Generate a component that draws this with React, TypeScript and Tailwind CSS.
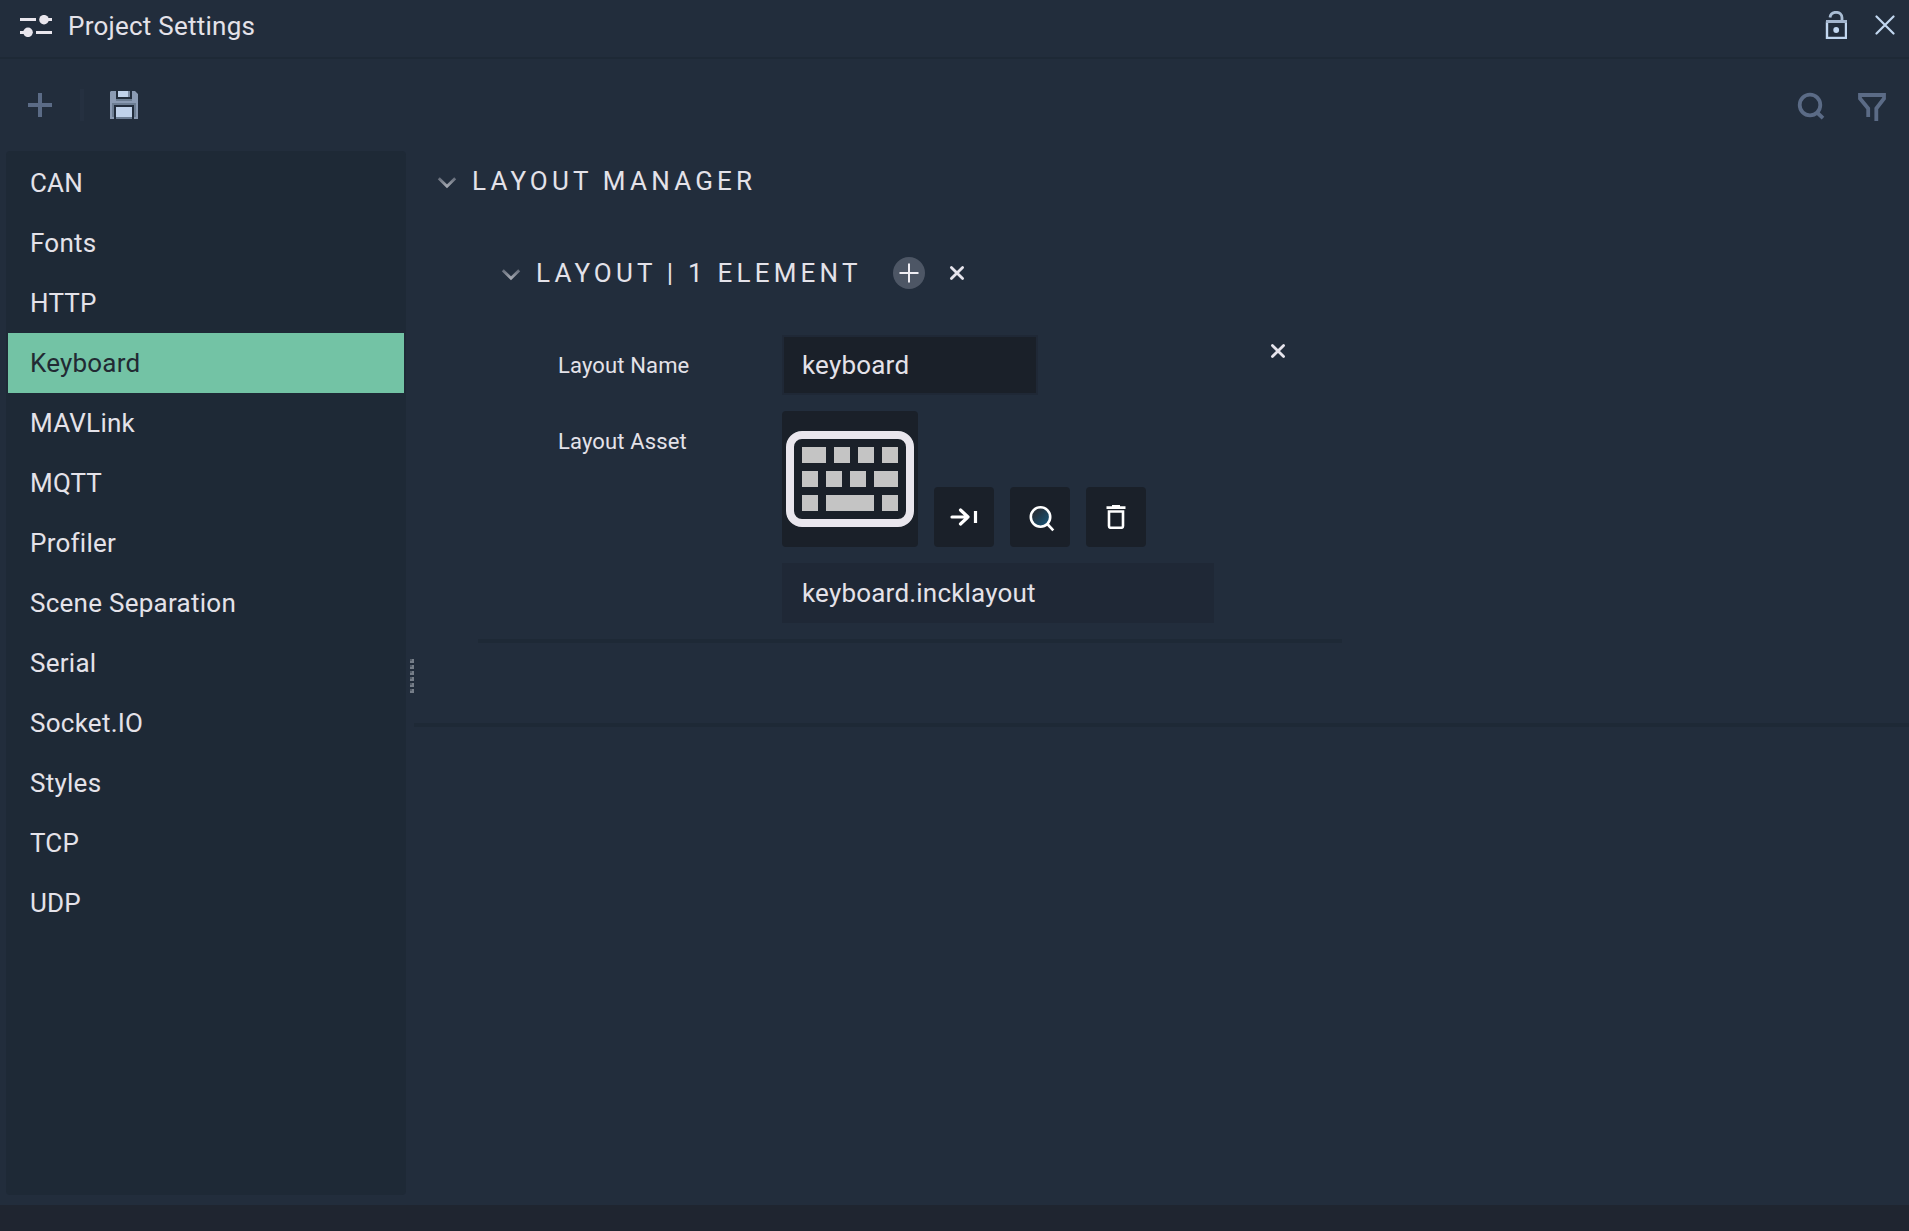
import React from "react";

const categories = [
  "CAN", "Fonts", "HTTP", "Keyboard", "MAVLink", "MQTT", "Profiler",
  "Scene Separation", "Serial", "Socket.IO", "Styles", "TCP", "UDP",
];

// x, y, width on the keyboard drawing; every key is 16 high
const keys = [
  [16, 16, 24], [48, 16, 16], [72, 16, 16], [96, 16, 16],
  [16, 40, 16], [40, 40, 16], [64, 40, 16], [88, 40, 24],
  [16, 64, 16], [40, 64, 48], [96, 64, 16],
];

function Chevron() {
  return (
    <svg className="mt-1 block h-3 w-5" viewBox="0 0 20 12" fill="none" strokeWidth="2.800">
      <defs>
        <linearGradient id="chevron" x1="0" y1="0" x2="0" y2="1">
          <stop offset="0" stopColor="#666d7a" />
          <stop offset="1" stopColor="#a3a7b0" />
        </linearGradient>
      </defs>
      <path d="M1.800 1.200 10 9.200 18.200 1.200" stroke="url(#chevron)" />
    </svg>
  );
}

function Cross() {
  return (
    <svg className="block size-4" viewBox="0 0 16 16" fill="none" stroke="#e6e4ec" strokeWidth="2.8" strokeLinecap="round">
      <path d="M2.4 2.4 13.6 13.6M13.6 2.4 2.4 13.6" />
    </svg>
  );
}

function Header() {
  return (
    <header className="flex h-[59px] shrink-0 items-start border-b-2 border-[#1e2936]">
      <svg className="ml-5 mt-[15px] block h-[22px] w-8" viewBox="0 0 32 22" fill="#e9e6ed">
        <path d="M0 3h16v3H0zM28 3h4v3h-4zM0 16h4v3H0zM16 16h16v3H16z" />
        <circle cx="24" cy="4.7" r="4.8" />
        <circle cx="8" cy="17.3" r="4.8" />
      </svg>
      <h1 className="ml-4 mt-[11px] text-[26px] leading-[30px] tracking-[0.24px]">Project Settings</h1>
      <svg className="ml-auto mt-[11px] block h-7 w-[22px]" viewBox="0 0 22 28" fill="none" stroke="#c2d7f0" strokeWidth="2">
        <path d="M5 6.500C5.500 3 8 1.300 11 1.300c3.500 0 6 2.300 6 5.500V10" stroke="#aabdd4" strokeWidth="2.800" />
        <path d="M2 10.500V27h19V10.500" strokeWidth="2.400" />
        <path d="M1 10.500h21" stroke="#a3b5cd" strokeWidth="3" />
        <circle cx="11.200" cy="19" r="2.900" fill="#c2d7f0" stroke="none" />
      </svg>
      <svg className="ml-[28px] mr-[14px] mt-[15px] block size-5" viewBox="0 0 20 20" fill="none" stroke="#c2d7f0" strokeWidth="2.200" strokeLinecap="round">
        <path d="M1.500 1.500l17 17M18.500 1.500l-17 17" />
      </svg>
    </header>
  );
}

function Toolbar() {
  return (
    <div className="flex h-[92px] shrink-0 items-center">
      <svg className="ml-7 block size-6" viewBox="0 0 24 24" fill="#5b6b86">
        <path d="M10 0h4v10h10v4H14v10h-4V14H0v-4h10z" />
      </svg>
      <div className="ml-7 h-8 w-1 bg-[#253040]" />
      <svg className="ml-[26px] block size-7" viewBox="0 0 28 28">
        <path d="M0 1 1 0h5v8h16V0h3l3 3v25h-4V14H4v14H0z" fill="#8b9bb3" />
        <path d="M6 8h16v2H6zM2 12h24v2H2zM2 14h2v12H2zM24 14h2v12h-2zM6 26h16v2H6z" fill="#6c7d92" />
        <path d="M8 0h10v6H8zM6 16h16v10H6z" fill="#c0d2ea" />
        <path d="M18 0h2v6h-2z" fill="#7b8ba2" />
      </svg>
      <svg className="ml-auto mt-0.5 block size-7" viewBox="0 0 28 28" fill="none" stroke="#5b6b86" strokeWidth="3.800">
        <circle cx="13" cy="13" r="10.300" />
        <path d="M20 20.500l6 5.700" />
      </svg>
      <svg className="ml-[33px] mr-[23px] mt-1 block size-7" viewBox="0 0 28 28" fill="none" stroke="#5b6b86" strokeWidth="3.800">
        <path d="M10.200 24V15.500L2 5.500V2h24v3.500L18.300 15.500V28" />
      </svg>
    </div>
  );
}

function Sidebar() {
  return (
    <nav className="h-[1044px] w-[400px] shrink-0 rounded bg-[#1e2936] p-0.5">
      <ul className="tracking-[0.200px]">
        {categories.map((name) => (
          <li
            key={name}
            className={
              name === "Keyboard"
                ? "h-[60px] bg-[#73c3a5] pl-[22px] text-[26px] leading-[60px] text-[#222a33]"
                : name === name.toUpperCase()
                  ? "h-[60px] pl-[22px] text-[26px] leading-[60px]"
                  : "h-[60px] pl-[22px] text-[26px] leading-[60px] tracking-[0.260px]"
            }
          >
            {name}
          </li>
        ))}
      </ul>
    </nav>
  );
}

function Splitter() {
  return (
    <div className="flex w-2 shrink-0 flex-col items-end gap-0.5 pt-[508px]">
      {[0, 1, 2, 3, 4, 5].map((i) => (
        <div key={i} className="size-1 bg-[#757d88]">
          <div className="size-0.5 bg-[#545d69]" />
        </div>
      ))}
    </div>
  );
}

function IconButton({ children }: { children: React.ReactNode }) {
  return (
    <button className="flex size-[60px] items-center justify-center rounded bg-[#1a2029]">{children}</button>
  );
}

function AssetField() {
  return (
    <div>
      <div className="flex items-end gap-4">
        <div className="flex size-[136px] items-center justify-center rounded bg-[#1a2029]">
          <svg className="block h-24 w-32" viewBox="0 0 128 96">
            <rect x="4" y="4" width="120" height="88" rx="12" fill="none" stroke="#e9e6ed" strokeWidth="8" />
            {keys.map(([x, y, w]) => (
              <rect key={`${x}-${y}`} x={x} y={y} width={w} height="16" fill="#c4c4c4" />
            ))}
          </svg>
        </div>
        <IconButton>
          <svg className="block h-[18px] w-7" viewBox="0 0 28 18" fill="none" stroke="#fff" strokeWidth="3.200" strokeLinecap="round" strokeLinejoin="round">
            <path d="M2 9h16M10.500 2 18 9l-7.500 7" />
            <path d="M25.500 3v12" strokeLinecap="butt" />
          </svg>
        </IconButton>
        <IconButton>
          <svg className="ml-1 mt-1 block size-[26px]" viewBox="0 0 26 26" fill="none" stroke="#fff" strokeWidth="2.600">
            <defs>
              <linearGradient id="lens" x1="0" y1="0" x2="1" y2="1">
                <stop offset="0.250" stopColor="#263039" />
                <stop offset="1" stopColor="#145a82" />
              </linearGradient>
            </defs>
            <circle cx="11.500" cy="11" r="9.700" fill="url(#lens)" />
            <path d="M18.300 18l6 6.300" />
          </svg>
        </IconButton>
        <IconButton>
          <svg className="block h-6 w-5" viewBox="0 0 20 24" fill="none" stroke="#fff" strokeWidth="2.600">
            <path d="M.500 2.600h19M6 1.300h8" />
            <path d="M3 6.500h14v14.500q0 1.800-1.800 1.800H4.800Q3 22.800 3 21z" />
          </svg>
        </IconButton>
      </div>
      <div className="mt-4 h-[60px] w-[432px] bg-[#1f2836] pl-5 text-[26px] leading-[60px] tracking-[0.200px]">keyboard.incklayout</div>
    </div>
  );
}

function LayoutGroup() {
  return (
    <section className="ml-16 w-[864px] border-b-4 border-[#1e2936] pb-4">
      <div className="flex h-8 items-center pl-[23px]">
        <Chevron />
        <h3 className="ml-[15px] w-[357px] whitespace-nowrap text-[26px] leading-8 tracking-[4.200px]">LAYOUT | 1 ELEMENT</h3>
        <button className="flex size-8 items-center justify-center rounded-full bg-[#4d5665]">
          <svg className="block size-5" viewBox="0 0 20 20" stroke="#f0eef4" strokeWidth="2">
            <path d="M10 .500v19M.500 10h19" />
          </svg>
        </button>
        <button className="ml-6">
          <Cross />
        </button>
      </div>
      <div className="mt-[46px] flex pl-20">
        <div className="flex flex-col gap-4">
          <div className="flex h-[60px] items-start">
            <label className="w-[224px] text-[22px] leading-[62px] tracking-[0.140px]">Layout Name</label>
            <div className="h-[60px] w-[256px] border-2 border-[#1f2836] bg-[#1a2029] pl-[18px] text-[26px] leading-[56px] tracking-[0.200px]">keyboard</div>
          </div>
          <div className="flex">
            <label className="w-[224px] text-[22px] leading-[62px] tracking-[0.140px]">Layout Asset</label>
            <AssetField />
          </div>
        </div>
        <button className="ml-14 mt-2 size-4">
          <Cross />
        </button>
      </div>
    </section>
  );
}

export default function App() {
  return (
    <div className="flex h-[1231px] w-[1909px] flex-col overflow-hidden bg-[#222d3c] font-['Roboto',sans-serif] text-[#e4e2e9]">
      <Header />
      <Toolbar />
      <div className="flex h-[1054px] shrink-0 pl-1.5">
        <Sidebar />
        <Splitter />
        <main className="min-w-0 flex-1">
          <section className="h-[576px] border-b-4 border-[#1e2936]">
            <div className="flex h-[106px] items-start pl-[23px] pt-[14px]">
              <div className="flex h-8 items-center">
                <Chevron />
                <h2 className="ml-[15px] text-[26px] leading-8 tracking-[4.200px]">LAYOUT MANAGER</h2>
              </div>
            </div>
            <LayoutGroup />
          </section>
        </main>
      </div>
      <footer className="flex-1 bg-[#1f2530]" />
    </div>
  );
}
